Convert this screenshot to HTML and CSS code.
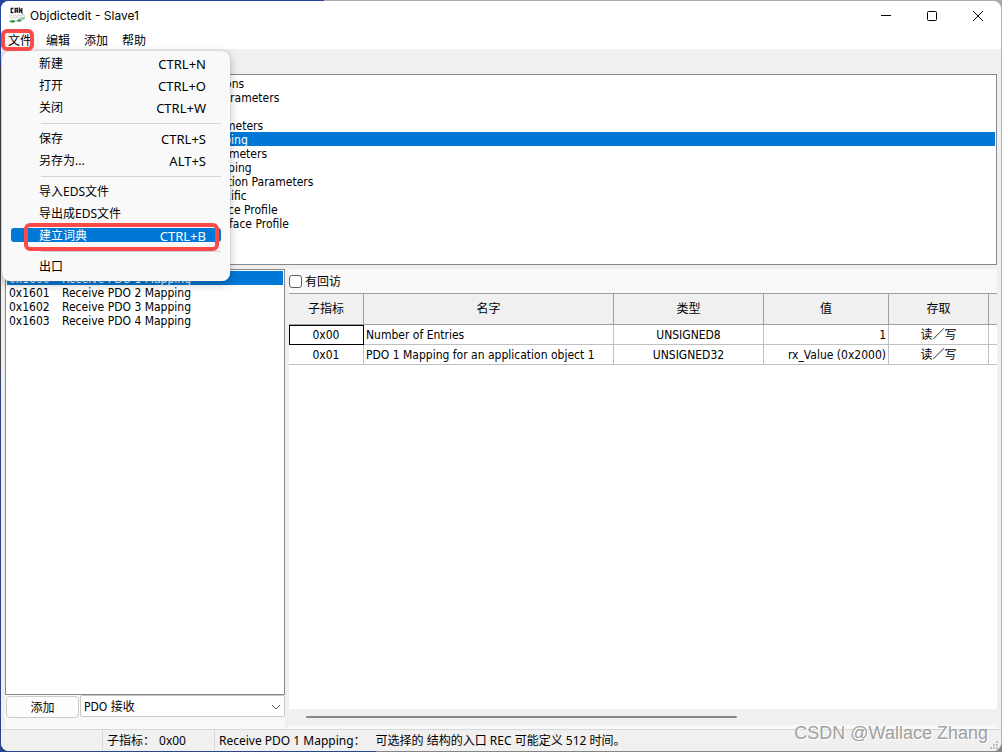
FILE: index.html
```html
<!DOCTYPE html>
<html lang="zh-CN">
<head>
<meta charset="utf-8">
<title>Objdictedit - Slave1</title>
<link rel="stylesheet" href="styles.css">
</head>
<body>
<div class="window">
  <header class="titlebar">
    <svg class="app-icon" width="18" height="18" viewBox="0 0 18 18" aria-hidden="true">
      <g fill="none" stroke="#222" stroke-width="1.3">
        <path d="M5.5 1.5H3.2v4h2.3M7.2 6V1.5h2.3V6M7.2 4h2.3M11.5 6V1.5l2.3 4V1"/>
      </g>
      <g fill="none" stroke="#d0d0d0" stroke-width="1">
        <circle cx="3" cy="9.5" r="1.6"/><circle cx="7" cy="9.5" r="1.6"/><circle cx="11" cy="9.5" r="1.6"/><circle cx="15" cy="9.5" r="1.6"/>
      </g>
      <path d="M1 14l4-1 3 1-3 2-3-1zM8 14l3-2 3 1-2 2z" fill="#36914d"/>
      <path d="M11 12l5-2 1 2-3 1z" fill="#91bd9d"/>
    </svg>
    <h1 class="title">Objdictedit - Slave1</h1>
    <div class="controls">
      <button class="control" aria-label="最小化"><svg width="12" height="12" viewBox="0 0 12 12"><path d="M1 5.5h10"/></svg></button>
      <button class="control" aria-label="最大化"><svg width="12" height="12" viewBox="0 0 12 12"><rect x="1.5" y="1.5" width="9" height="9" rx="1"/></svg></button>
      <button class="control" aria-label="关闭窗口"><svg width="12" height="12" viewBox="0 0 12 12"><path d="M1 1l10 10M11 1L1 11"/></svg></button>
    </div>
  </header>

  <nav class="menubar">
    <div class="menu-slot">
      <button class="menu-title open" aria-expanded="true">文件</button>
      <div class="menu">
        <button class="item"><span>新建</span><span class="key">CTRL+N</span></button>
        <button class="item"><span>打开</span><span class="key">CTRL+O</span></button>
        <button class="item"><span>关闭</span><span class="key">CTRL+W</span></button>
        <hr class="separator">
        <button class="item"><span>保存</span><span class="key">CTRL+S</span></button>
        <button class="item"><span>另存为...</span><span class="key">ALT+S</span></button>
        <hr class="separator">
        <button class="item"><span>导入EDS文件</span></button>
        <button class="item"><span>导出成EDS文件</span></button>
        <button class="item active"><span>建立词典</span><span class="key">CTRL+B</span></button>
        <hr class="separator">
        <button class="item"><span>出口</span></button>
      </div>
    </div>
    <button class="menu-title">编辑</button>
    <button class="menu-title">添加</button>
    <button class="menu-title">帮助</button>
  </nav>

  <main class="content">
    <ul class="list sections">
      <li>Data Type Definitions</li>
      <li>Communication Parameters</li>
      <li>SDO Parameters</li>
      <li>Receive PDO Parameters</li>
      <li class="selected">Receive PDO Mapping</li>
      <li>Transmit PDO Parameters</li>
      <li>Transmit PDO Mapping</li>
      <li>Other Communication Parameters</li>
      <li>Manufacturer Specific</li>
      <li>Standardized Device Profile</li>
      <li>Standardized Interface Profile</li>
    </ul>

    <div class="split">
      <section class="left">
        <ul class="list indexes">
          <li class="selected"><span>0x1600</span><span>Receive PDO 1 Mapping</span></li>
          <li><span>0x1601</span><span>Receive PDO 2 Mapping</span></li>
          <li><span>0x1602</span><span>Receive PDO 3 Mapping</span></li>
          <li><span>0x1603</span><span>Receive PDO 4 Mapping</span></li>
        </ul>
        <div class="add-row">
          <button class="add">添加</button>
          <div class="select-box">
            <select class="type" aria-label="类型"><option>PDO 接收</option></select>
            <svg class="chevron" width="10" height="6" viewBox="0 0 10 6" aria-hidden="true"><path d="M1 1l4 4 4-4"/></svg>
          </div>
        </div>
      </section>

      <section class="right">
        <div class="callback">
          <input type="checkbox" id="callback" class="check"><label for="callback">有回访</label>
        </div>
        <div class="grid-area">
          <table class="grid">
            <colgroup><col class="c-index"><col class="c-name"><col class="c-type"><col class="c-value"><col class="c-access"><col></colgroup>
            <thead>
              <tr><th>子指标</th><th>名字</th><th>类型</th><th>值</th><th>存取</th><th></th></tr>
            </thead>
            <tbody>
              <tr><td class="cursor">0x00</td><td class="name">Number of Entries</td><td>UNSIGNED8</td><td class="value">1</td><td>读／写</td><td></td></tr>
              <tr><td>0x01</td><td class="name">PDO 1 Mapping for an application object 1</td><td>UNSIGNED32</td><td class="value">rx_Value (0x2000)</td><td>读／写</td><td></td></tr>
            </tbody>
          </table>
        </div>
        <div class="scrollbar"><div class="thumb"></div></div>
      </section>
    </div>
  </main>

  <footer class="status">
    <div class="pane first"></div>
    <div class="pane second"><span>子指标：</span><span>0x00</span></div>
    <div class="pane third"><span>Receive PDO 1 Mapping：</span><span>可选择的 结构的入口 REC 可能定义 512 时间。</span></div>
    <svg class="grip" width="10" height="10" viewBox="0 0 10 10" aria-hidden="true"><path d="M7 1h2v2H7zM4 4h2v2H4zM7 4h2v2H7zM1 7h2v2H1zM4 7h2v2H4zM7 7h2v2H7z"/></svg>
  </footer>
</div>
<div class="mark mark-file"></div>
<div class="mark mark-build"></div>
<div class="watermark">CSDN @Wallace Zhang</div>
</body>
</html>
```

FILE: styles.css
```css
* {
  box-sizing: border-box;
}

body {
  margin: 0;
  height: 100vh;
  padding: 1px;
  overflow: hidden;
  color: #000;
  font: 12px/14px "DejaVu Sans Condensed", "Noto Sans CJK SC", sans-serif;
  background:
    linear-gradient(90deg, #2346a0 0 324px, #aaa 324px) top / 100% 8px no-repeat,
    linear-gradient(90deg, #2b458c 0 376px, #858585 376px) bottom / 100% 8px no-repeat,
    linear-gradient(90deg, transparent 50%, #b4b4b4 50%),
    linear-gradient(#2346a0 0 66px, #444 66px 360px, #2b458c 400px);
}

button, select, input {
  font: inherit;
  color: inherit;
  margin: 0;
}

button {
  border: 0;
  padding: 0;
  background: none;
}

.window {
  height: 100%;
  display: flex;
  flex-direction: column;
  background: #f9f9f9;
  border-radius: 8px;
}

.titlebar {
  height: 30px;
  flex: none;
  display: flex;
  align-items: center;
  padding-left: 7px;
  background: #fff;
  border-radius: 8px 8px 0 0;
}

.app-icon {
  margin-right: 4px;
}

.title {
  margin: 0;
  flex: 1;
  font: 12px/18px Inter, "Noto Sans", sans-serif;
}

.controls {
  display: flex;
}

.control {
  width: 46px;
  height: 30px;
  display: grid;
  place-items: center;
}

.control svg {
  fill: none;
  stroke: #000;
}

.menubar {
  height: 18px;
  flex: none;
  display: flex;
  background: #fff;
  font: 12px/18px "Noto Sans", "Noto Sans CJK SC", sans-serif;
}

.menu-slot {
  position: relative;
}

.menu-title {
  width: 38px;
  height: 18px;
  padding-top: 2px;
  line-height: 16px;
}

.open {
  background: #f9f9f9;
}

.menu {
  position: absolute;
  z-index: 2;
  top: 20px;
  left: 1px;
  width: 228px;
  padding: 1px 9px 4px;
  display: flex;
  flex-direction: column;
  background: #f9f9f9;
  border-radius: 8px;
  box-shadow: 0 0 1px #999, 0 3px 10px #0004;
}

.item {
  height: 22px;
  display: flex;
  justify-content: space-between;
  align-items: center;
  padding: 2px 15px 0 28px;
}

.key {
  font-size: 13px;
}

.active {
  height: 14px;
  margin: 4px 0;
  color: #fff;
  background: #0078d7;
  border-radius: 3px;
}

.separator {
  height: 1px;
  margin: 5px 0 3px 30px;
  border: 0;
  background: #d4d4d4;
}

.content {
  flex: 1;
  min-height: 0;
  display: flex;
  flex-direction: column;
  background: #f0f0f0;
  padding: 25px 4px 0;
}

.list {
  list-style: none;
  margin: 0;
  padding: 1px;
  background: #fff;
  border: 1px solid #828790;
}

.list li {
  display: flex;
  height: 14px;
  line-height: 16px;
  white-space: nowrap;
  padding-left: 2px;
}

.list .selected {
  background: #0078d7;
  color: #fff;
}

.sections {
  height: 191px;
  flex: none;
}

.sections li {
  padding-left: 122px;
}

.indexes {
  flex: 1;
}

.indexes span:first-child {
  width: 53px;
}

.split {
  flex: 1;
  min-height: 0;
  display: flex;
  gap: 4px;
  padding-top: 4px;
}

.left {
  width: 280px;
  flex: none;
  display: flex;
  flex-direction: column;
  background: #f9f9f9;
}

.add-row {
  height: 34px;
  display: flex;
  gap: 1px;
  align-items: flex-start;
}

.add {
  width: 73px;
  height: 22px;
  padding-top: 2px;
  margin: 1px 0 0 1px;
  background: #fdfdfd;
  border: 1px solid #ccc;
  border-radius: 4px;
}

.select-box {
  flex: 1;
  position: relative;
}

.type {
  width: 100%;
  height: 22px;
  padding: 2px 3px 0;
  appearance: none;
  background: #fff;
  border: 1px solid #c8c8c8;
  border-radius: 2px;
}

.chevron {
  position: absolute;
  right: 4px;
  top: 9px;
  fill: none;
  stroke: #666;
  pointer-events: none;
}

.right {
  flex: 1;
  min-width: 0;
  display: flex;
  flex-direction: column;
  background: #f9f9f9;
  padding-bottom: 4px;
}

.callback {
  height: 24px;
  flex: none;
  display: flex;
  align-items: center;
  gap: 3px;
}

.callback label {
  padding-top: 2px;
}

.check {
  appearance: none;
  width: 13px;
  height: 13px;
  background: #fff;
  border: 1px solid #5f5f5f;
  border-radius: 3px;
}

.grid-area {
  flex: 1;
  overflow: hidden;
  background: #fff;
}

.grid {
  width: 100%;
  table-layout: fixed;
  border-collapse: separate;
  border-spacing: 0;
  text-align: center;
  border-top: 1px solid #a0a0a0;
}

.grid th {
  height: 31px;
  padding: 0;
  font-weight: normal;
  background: #f0f0f0;
  border-right: 1px solid #a0a0a0;
  border-bottom: 1px solid #a0a0a0;
}

.grid td {
  height: 20px;
  padding: 0;
  border-right: 1px solid #c0c0c0;
  border-bottom: 1px solid #c0c0c0;
  white-space: nowrap;
}

.grid th:last-child, .grid td:last-child {
  border-right: 0;
}

.grid .cursor {
  outline: 1px solid #000;
  outline-offset: -1px;
}

.grid .name {
  text-align: left;
  padding-left: 2px;
}

.grid .value {
  text-align: right;
  padding-right: 2px;
}

.c-index { width: 75px; }
.c-name { width: 250px; }
.c-type { width: 150px; }
.c-value { width: 125px; }
.c-access { width: 100px; }

.scrollbar {
  height: 16px;
  flex: none;
  padding: 7px 17px;
  background: #f0f0f0;
}

.thumb {
  width: 64%;
  height: 2px;
  background: #868686;
  border-radius: 1px;
}

.status {
  height: 22px;
  flex: none;
  display: flex;
  align-items: center;
  background: #f0f0f0;
  border-top: 1px solid #d7d7d7;
  border-radius: 0 0 8px 8px;
  font: 12px/19px "Noto Sans", "Noto Sans CJK SC", sans-serif;
}

.pane {
  height: 19px;
  display: flex;
  white-space: pre;
}

.first {
  width: 102px;
  border-right: 1px solid #d7d7d7;
}

.second {
  width: 112px;
  padding-left: 4px;
  gap: 4px;
  border-right: 1px solid #d7d7d7;
}

.third {
  flex: 1;
  padding-left: 4px;
  gap: 10px;
}

.grip {
  align-self: flex-end;
  margin: 0 2px 1px 0;
  fill: #bfbfbf;
}

.mark {
  position: absolute;
  z-index: 3;
  border: 4px solid #fa4b48;
  border-radius: 6px;
  pointer-events: none;
}

.mark-file {
  left: 1px;
  top: 29px;
  width: 33px;
  height: 22px;
}

.mark-build {
  left: 24px;
  top: 223px;
  width: 195px;
  height: 28px;
}

.watermark {
  position: absolute;
  right: 14px;
  bottom: 8px;
  font: 18px/22px "Liberation Sans", sans-serif;
  color: #888c;
  text-shadow: 1px 1px 0 #fff;
}
```
